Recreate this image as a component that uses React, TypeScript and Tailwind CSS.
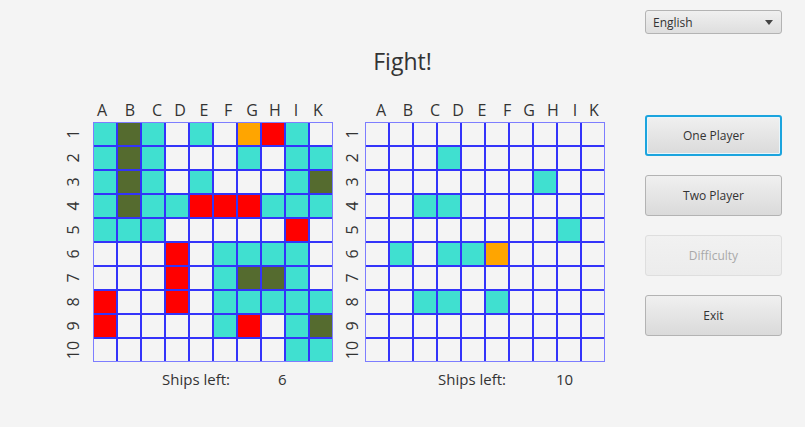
type Cell = 'e' | 't' | 'o' | 'r' | 'y'

const CELL_BG: Record<Cell, string> = {
  e: 'bg-[#f4f4f4]',
  t: 'bg-[#40e0d0]',
  o: 'bg-[#556b2f]',
  r: 'bg-[#ff0000]',
  y: 'bg-[#ffa500]'
}

const LETTERS = ['A', 'B', 'C', 'D', 'E', 'F', 'G', 'H', 'I', 'K']

// t = water, o = sunk ship, r = hit ship, y = last shot
const LEFT_ROWS: Cell[][] = [
  ['t', 'o', 't', 'e', 't', 'e', 'y', 'r', 't', 'e'],
  ['t', 'o', 't', 'e', 'e', 'e', 't', 'e', 't', 't'],
  ['t', 'o', 't', 'e', 't', 'e', 'e', 'e', 't', 'o'],
  ['t', 'o', 't', 't', 'r', 'r', 'r', 't', 't', 't'],
  ['t', 't', 't', 'e', 'e', 'e', 'e', 'e', 'r', 'e'],
  ['e', 'e', 'e', 'r', 'e', 't', 't', 't', 't', 'e'],
  ['e', 'e', 'e', 'r', 'e', 't', 'o', 'o', 't', 'e'],
  ['r', 'e', 'e', 'r', 'e', 't', 't', 't', 't', 't'],
  ['r', 'e', 'e', 'e', 'e', 't', 'r', 'e', 't', 'o'],
  ['e', 'e', 'e', 'e', 'e', 'e', 'e', 'e', 't', 't']
]

const RIGHT_ROWS: Cell[][] = [
  ['e', 'e', 'e', 'e', 'e', 'e', 'e', 'e', 'e', 'e'],
  ['e', 'e', 'e', 't', 'e', 'e', 'e', 'e', 'e', 'e'],
  ['e', 'e', 'e', 'e', 'e', 'e', 'e', 't', 'e', 'e'],
  ['e', 'e', 't', 't', 'e', 'e', 'e', 'e', 'e', 'e'],
  ['e', 'e', 'e', 'e', 'e', 'e', 'e', 'e', 't', 'e'],
  ['e', 't', 'e', 't', 't', 'y', 'e', 'e', 'e', 'e'],
  ['e', 'e', 'e', 'e', 'e', 'e', 'e', 'e', 'e', 'e'],
  ['e', 'e', 't', 't', 'e', 't', 'e', 'e', 'e', 'e'],
  ['e', 'e', 'e', 'e', 'e', 'e', 'e', 'e', 'e', 'e'],
  ['e', 'e', 'e', 'e', 'e', 'e', 'e', 'e', 'e', 'e']
]

const LEFT_LETTER_W = ['w-[28px]', 'w-[27px]', 'w-[23px]', 'w-[24px]', 'w-[24px]', 'w-[24px]', 'w-[23px]', 'w-[21px]', 'w-[22px]', 'w-[10px]']
const RIGHT_LETTER_W = ['w-[27px]', 'w-[27px]', 'w-[23px]', 'w-[24px]', 'w-[25px]', 'w-[22px]', 'w-[24px]', 'w-[22px]', 'w-[19px]', 'w-[10px]']

interface BoardProps {
  rows: Cell[][]
  letterWidths: string[]
  letterOffset: string
  labelGap: string
  shipsOffset: string
  countGap: string
  ships: number
}

function Board ({ rows, letterWidths, letterOffset, labelGap, shipsOffset, countGap, ships }: BoardProps) {
  return (
    <div className="flex flex-col">
      <div className="flex h-[23px] text-[16px] leading-[22px] text-[#333]">
        <div className={`w-[22px] shrink-0 ${labelGap}`} />
        <div className={`shrink-0 ${letterOffset}`} />
        {LETTERS.map((l, i) => (
          <div key={l} className={`flex shrink-0 ${letterWidths[i]}`}>
            <div className="flex w-0 justify-center">
              <span>{l}</span>
            </div>
          </div>
        ))}
      </div>
      <div className="flex">
        <div className={`flex w-[22px] flex-col gap-[2px] pt-[1px] ${labelGap}`}>
          {rows.map((_, i) => (
            <div key={i} className="flex h-[22px] items-center justify-center">
              <span className="-rotate-90 whitespace-nowrap text-[16px] leading-[16px] text-[#333]">{i + 1}</span>
            </div>
          ))}
        </div>
        <div className="border border-[#7d7dff]">
          <div className="grid grid-cols-10 gap-[2px] bg-[#3333fa]">
            {rows.flatMap((row, r) =>
              row.map((c, ci) => (
                <div key={`${r}-${ci}`} className={`h-[22px] w-[22px] ${CELL_BG[c]}`} />
              ))
            )}
          </div>
        </div>
      </div>
      <div className="mt-[7px] flex text-[15px] leading-[20px] text-[#333]">
        <div className={`w-[22px] shrink-0 ${labelGap}`} />
        <div className={`shrink-0 ${shipsOffset}`} />
        <span>Ships left:</span>
        <span className={countGap}>{ships}</span>
      </div>
    </div>
  )
}

function FxButton ({ label, focused, disabled }: { label: string; focused?: boolean; disabled?: boolean }) {
  let cls = 'border border-[#b3b3b3] bg-gradient-to-b from-[#f0f0f0] to-[#dadada] text-[#333]'
  if (focused) cls = 'border-2 border-[#1ba4de] bg-gradient-to-b from-[#f0f0f0] to-[#dadada] text-[#333] shadow-[inset_0_0_0_1px_#e8f6fc]'
  if (disabled) cls = 'border border-[#dedede] bg-gradient-to-b from-[#f1f1f1] to-[#ececec] text-[#a9a9a9]'
  return (
    <button type="button" className={`h-[41px] w-[137px] rounded-[3px] text-[12px] ${cls}`}>
      {label}
    </button>
  )
}

export default function App () {
  return (
    <div className="flex h-[427px] w-[805px] flex-col bg-[#f4f4f4] font-['Open_Sans',sans-serif]">
      <div className="flex justify-end pr-[23px] pt-[10px]">
        <div className="flex h-[24px] w-[137px] items-center justify-between rounded-[3px] border border-[#b3b3b3] bg-gradient-to-b from-[#f0f0f0] to-[#dedede] pl-[7px] pr-[8px] pt-[1px] text-[12px] text-[#333]">
          <span>English</span>
          <svg width="8" height="5" viewBox="0 0 8 5">
            <path d="M0 0h8L4 5z" fill="#444" />
          </svg>
        </div>
      </div>
      <h1 className="mt-[12px] text-center text-[23px] leading-[31px] text-[#333]">Fight!</h1>
      <div className="flex items-start pl-[62px]">
        <div className="pt-[22px]">
          <Board
            rows={LEFT_ROWS}
            letterWidths={LEFT_LETTER_W}
            letterOffset="w-[9px]"
            labelGap="mr-[9px]"
            shipsOffset="w-[69px]"
            countGap="ml-[48px]"
            ships={6}
          />
        </div>
        <div className="ml-[8px] pt-[22px]">
          <Board
            rows={RIGHT_ROWS}
            letterWidths={RIGHT_LETTER_W}
            letterOffset="w-[16px]"
            labelGap="mr-[2px]"
            shipsOffset="w-[73px]"
            countGap="ml-[50px]"
            ships={10}
          />
        </div>
        <div className="ml-[40px] flex flex-col gap-[19px] pt-[38px]">
          <FxButton label="One Player" focused />
          <FxButton label="Two Player" />
          <FxButton label="Difficulty" disabled />
          <FxButton label="Exit" />
        </div>
      </div>
    </div>
  )
}
